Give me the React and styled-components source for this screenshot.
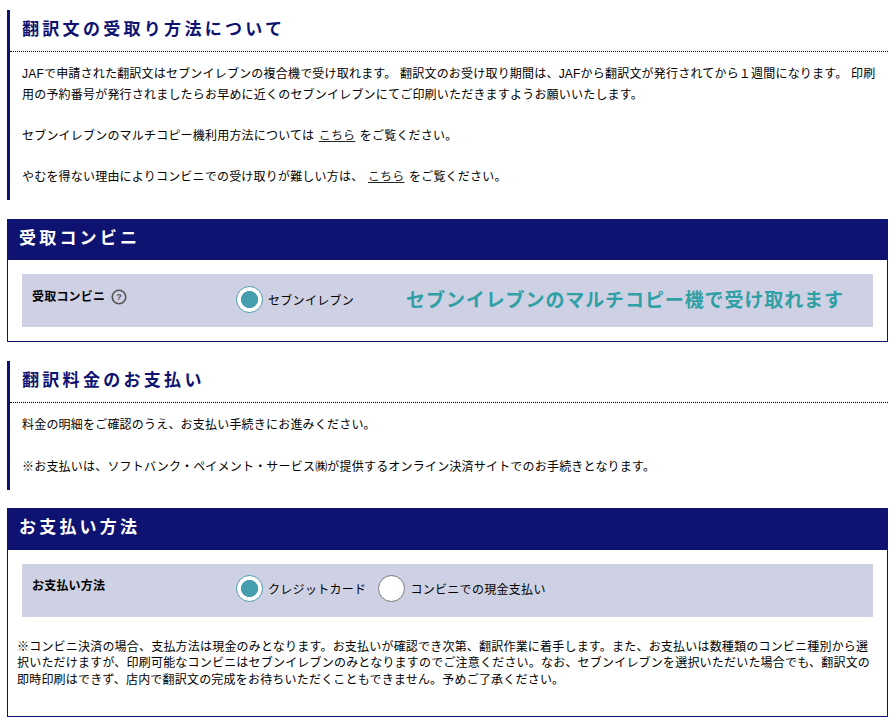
import React from 'react'
import styled, { createGlobalStyle } from 'styled-components'

const NAVY = '#0e1270'
const FONT = `"Liberation Sans", "Noto Sans CJK JP", sans-serif`

const GlobalStyle = createGlobalStyle`
  html, body {
    margin: 0;
    padding: 0;
    background: #fff;
  }
  body {
    font-family: ${FONT};
    font-size: 12px;
    color: #000;
  }
`

const Page = styled.div`
  width: 881px;
  padding: 10px 0 0 7px;
`

const Section = styled.section`
  border-left: 3px solid ${NAVY};
  margin-bottom: ${(p) => p.$gap}px;
`

const SectionTitle = styled.h2`
  margin: 0;
  height: 41px;
  padding-left: 12px;
  border-bottom: 1px dotted #000;
  color: ${NAVY};
  font-size: 17px;
  font-weight: bold;
  letter-spacing: 3.3px;
  line-height: 40px;
`

const SectionBody = styled.div`
  padding: 12px 10px 12.4px 12px;
`

const Para = styled.p`
  margin: 0 0 ${(p) => p.$after ?? 20.6}px;
  font-size: 12px;
  letter-spacing: 0.2px;
  line-height: 20.6px;
`

const TextLink = styled.a`
  margin: 0 4.5px;
  color: #222;
  text-decoration: underline;
`

const Card = styled.section`
  border: 1px solid ${NAVY};
  border-top: 0;
  margin-bottom: ${(p) => p.$gap}px;
`

const CardHeader = styled.h3`
  margin: 0 -1px;
  height: 41.4px;
  padding-left: 12px;
  background: ${NAVY};
  color: #fff;
  font-size: 17px;
  font-weight: bold;
  letter-spacing: 3.2px;
  line-height: 39px;
`

const CardBody = styled.div`
  padding: 14px 14px ${(p) => p.$bottom}px;
`

const FormRow = styled.div`
  display: flex;
  height: 53px;
  background: #ced0e3;
`

const RowLabel = styled.div`
  display: flex;
  align-items: flex-start;
  gap: 6px;
  width: 204px;
  padding: ${(p) => p.$top}px 0 0 10px;
  font-size: 12px;
  font-weight: bold;
  letter-spacing: 0.2px;
  line-height: 16px;
  box-sizing: border-box;
`

const HelpIcon = styled.svg`
  width: 16px;
  height: 16px;
  flex: none;
`

const Options = styled.div`
  display: flex;
  align-items: center;
  padding: 0 0 3px 10px;
`

const Option = styled.label`
  display: flex;
  align-items: center;
  gap: 5px;
  margin-right: ${(p) => p.$after}px;
  font-size: 12px;
  letter-spacing: 0.3px;
`

const Radio = styled.span`
  box-sizing: border-box;
  width: 27px;
  height: 27px;
  border: 1px solid ${(p) => (p.$checked ? '#4a9fb0' : '#777')};
  border-radius: 50%;
  background: ${(p) => (p.$checked ? 'radial-gradient(circle, #459eb0 0 8.3px, #fff 8.8px)' : '#fff')};
  flex: none;
`

const Notice = styled.span`
  margin-bottom: 2px;
  color: #2fa0a5;
  font-size: 19px;
  font-weight: bold;
  letter-spacing: 0.9px;
`

const FinePrint = styled.p`
  margin: 22px 0 0 -5px;
  font-size: 12px;
  letter-spacing: 0.2px;
  line-height: 16.8px;
`

export default function App() {
  return (
    <Page>
      <GlobalStyle />
      <Section $gap={19}>
        <SectionTitle>翻訳文の受取り方法について</SectionTitle>
        <SectionBody>
          <Para>
            JAFで申請された翻訳文はセブンイレブンの複合機で受け取れます。 翻訳文のお受け取り期間は、JAFから翻訳文が発行されてから１週間になります。 印刷用の予約番号が発行されましたらお早めに近くのセブンイレブンにてご印刷いただきますようお願いいたします。
          </Para>
          <Para>
            セブンイレブンのマルチコピー機利用方法については<TextLink>こちら</TextLink>をご覧ください。
          </Para>
          <Para $after={0}>
            やむを得ない理由によりコンビニでの受け取りが難しい方は、<TextLink>こちら</TextLink>をご覧ください。
          </Para>
        </SectionBody>
      </Section>

      <Card $gap={19}>
        <CardHeader>受取コンビニ</CardHeader>
        <CardBody $bottom={14}>
          <FormRow>
            <RowLabel $top={15}>
              受取コンビニ
              <HelpIcon viewBox="0 0 16 16">
                <circle cx="8" cy="8" r="6.8" fill="none" stroke="#555" strokeWidth="1.6" />
                <text x="8" y="11.2" fontSize="9" fontWeight="bold" textAnchor="middle" fill="#555">?</text>
              </HelpIcon>
            </RowLabel>
            <Options>
              <Option $after={52}>
                <Radio $checked />
                セブンイレブン
              </Option>
              <Notice>セブンイレブンのマルチコピー機で受け取れます</Notice>
            </Options>
          </FormRow>
        </CardBody>
      </Card>

      <Section $gap={18.6}>
        <SectionTitle>翻訳料金のお支払い</SectionTitle>
        <SectionBody>
          <Para>料金の明細をご確認のうえ、お支払い手続きにお進みください。</Para>
          <Para $after={0}>
            ※お支払いは、ソフトバンク・ペイメント・サービス㈱が提供するオンライン決済サイトでのお手続きとなります。
          </Para>
        </SectionBody>
      </Section>

      <Card $gap={0}>
        <CardHeader>お支払い方法</CardHeader>
        <CardBody $bottom={27.6}>
          <FormRow>
            <RowLabel $top={14}>お支払い方法</RowLabel>
            <Options>
              <Option $after={12}>
                <Radio $checked />
                クレジットカード
              </Option>
              <Option $after={0}>
                <Radio />
                コンビニでの現金支払い
              </Option>
            </Options>
          </FormRow>
          <FinePrint>
            ※コンビニ決済の場合、支払方法は現金のみとなります。お支払いが確認でき次第、翻訳作業に着手します。また、お支払いは数種類のコンビニ種別から選択いただけますが、印刷可能なコンビニはセブンイレブンのみとなりますのでご注意ください。なお、セブンイレブンを選択いただいた場合でも、翻訳文の即時印刷はできず、店内で翻訳文の完成をお待ちいただくこともできません。予めご了承ください。
          </FinePrint>
        </CardBody>
      </Card>
    </Page>
  )
}
